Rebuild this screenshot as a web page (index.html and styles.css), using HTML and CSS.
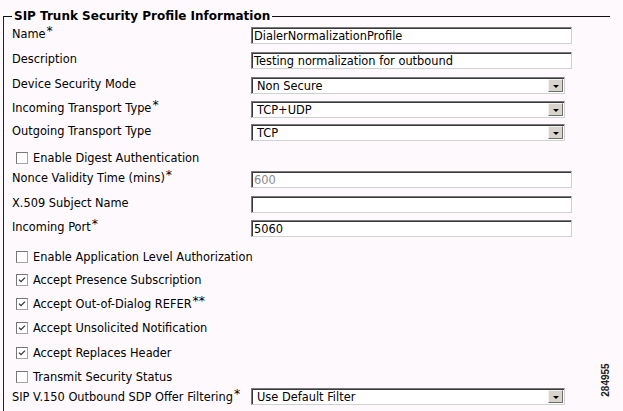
FILE: index.html
```html
<!DOCTYPE html>
<html lang="en">
<head>
<meta charset="utf-8">
<title>SIP Trunk Security Profile Information</title>
<link rel="stylesheet" href="styles.css">
</head>
<body>
<fieldset class="panel">
  <legend class="panel-title">SIP Trunk Security Profile Information</legend>
  <div class="form">
    <div class="label">Name<span class="req">*</span></div>
    <div class="field"><div class="textbox">DialerNormalizationProfile</div></div>

    <div class="label">Description</div>
    <div class="field"><div class="textbox">Testing normalization for outbound</div></div>

    <div class="label">Device Security Mode</div>
    <div class="field"><div class="select"><span class="select-value">Non Secure</span><span class="select-btn"><span class="arrow"></span></span></div></div>

    <div class="label">Incoming Transport Type<span class="req">*</span></div>
    <div class="field"><div class="select"><span class="select-value">TCP+UDP</span><span class="select-btn"><span class="arrow"></span></span></div></div>

    <div class="label">Outgoing Transport Type</div>
    <div class="field"><div class="select"><span class="select-value">TCP</span><span class="select-btn"><span class="arrow"></span></span></div></div>

    <div class="check-row"><span class="cb"></span><span>Enable Digest Authentication</span></div>

    <div class="label">Nonce Validity Time (mins)<span class="req">*</span></div>
    <div class="field"><div class="textbox disabled">600</div></div>

    <div class="label">X.509 Subject Name</div>
    <div class="field"><div class="textbox"></div></div>

    <div class="label">Incoming Port<span class="req">*</span></div>
    <div class="field"><div class="textbox">5060</div></div>

    <div class="check-row"><span class="cb"></span><span>Enable Application Level Authorization</span></div>
    <div class="check-row"><span class="cb"><svg viewBox="0 0 10 10" width="10" height="10"><polyline points="2,4.6 4,6.6 8,2.6" fill="none" stroke="#333" stroke-width="1.3"/></svg></span><span>Accept Presence Subscription</span></div>
    <div class="check-row"><span class="cb"><svg viewBox="0 0 10 10" width="10" height="10"><polyline points="2,4.6 4,6.6 8,2.6" fill="none" stroke="#333" stroke-width="1.3"/></svg></span><span>Accept Out-of-Dialog REFER<span class="req">**</span></span></div>
    <div class="check-row"><span class="cb"><svg viewBox="0 0 10 10" width="10" height="10"><polyline points="2,4.6 4,6.6 8,2.6" fill="none" stroke="#333" stroke-width="1.3"/></svg></span><span>Accept Unsolicited Notification</span></div>
    <div class="check-row"><span class="cb"><svg viewBox="0 0 10 10" width="10" height="10"><polyline points="2,4.6 4,6.6 8,2.6" fill="none" stroke="#333" stroke-width="1.3"/></svg></span><span>Accept Replaces Header</span></div>
    <div class="check-row"><span class="cb"></span><span>Transmit Security Status</span></div>

    <div class="label last">SIP V.150 Outbound SDP Offer Filtering<span class="req">*</span></div>
    <div class="field"><div class="select"><span class="select-value">Use Default Filter</span><span class="select-btn"><span class="arrow"></span></span></div></div>
  </div>
</fieldset>
<div class="fig-id">284955</div>
</body>
</html>
```
FILE: styles.css
```css
html, body {
  margin: 0;
  padding: 0;
}
body {
  background: #fdf9fd;
  width: 623px;
  height: 411px;
  overflow: hidden;
  position: relative;
  font-family: "DejaVu Sans", Verdana, sans-serif;
  font-size: 11.4px;
  color: #000;
}
.panel {
  margin: 9px 0 0 3px;
  padding: 0 0 0 8px;
  width: 598px;
  border: none;
  border-top: 1px solid #111;
  border-left: 1px solid #222;
  min-height: 420px;
  box-sizing: content-box;
}
.panel-title {
  font-weight: bold;
  font-size: 12px;
  line-height: 14px;
  padding: 0 2px;
  margin: 0;
}
.form {
  display: grid;
  grid-template-columns: 239px 321px;
  grid-template-rows: 25px 25px 24px 23px 21px 26px 25px 24px 26px 22px 23px 25px 24px 26px 22px 20px;
  padding-top: 4px;
}
.label {
  line-height: 14px;
  white-space: nowrap;
}
.label.last {
  padding-top: 2px;
}
.req {
  font-size: 12.5px;
  vertical-align: 3px;
  line-height: 0;
  margin-left: 1px;
}
.field {
  display: flex;
  align-items: flex-start;
}
.textbox {
  box-sizing: border-box;
  width: 321px;
  height: 17px;
  background: #fff;
  border: 1px solid;
  border-color: #7a7a7a #d0d0d0 #d0d0d0 #7a7a7a;
  box-shadow: inset 1px 1px 0 #3a3a3a;
  padding: 1px 0 0 2px;
  line-height: 14px;
  white-space: nowrap;
  overflow: hidden;
}
.textbox.disabled {
  color: #8a8a8a;
}
.select {
  box-sizing: border-box;
  width: 314px;
  height: 17px;
  background: #fff;
  border: 1px solid;
  border-color: #7a7a7a #d0d0d0 #d0d0d0 #7a7a7a;
  box-shadow: inset 1px 1px 0 #3a3a3a;
  display: flex;
  align-items: stretch;
  padding: 1px;
}
.select-value {
  flex: 1;
  padding: 0 0 0 4px;
  line-height: 14px;
  white-space: nowrap;
}
.select-btn {
  width: 15px;
  box-sizing: border-box;
  background: #d8d4cc;
  border: 1px solid;
  border-color: #f4f2ee #6e6e6e #6e6e6e #f4f2ee;
  display: flex;
  align-items: center;
  justify-content: center;
}
.arrow {
  width: 0;
  height: 0;
  border-left: 3px solid transparent;
  border-right: 3px solid transparent;
  border-top: 3px solid #000;
  margin-top: 1px;
}
.check-row {
  grid-column: 1 / -1;
  display: flex;
  align-items: center;
  gap: 5px;
  padding-left: 4px;
  line-height: 14px;
  white-space: nowrap;
}
.cb {
  box-sizing: border-box;
  width: 12px;
  height: 12px;
  background: #fff;
  border: 1px solid;
  border-color: #767676 #a4a4a4 #a4a4a4 #767676;
  display: flex;
  align-items: center;
  justify-content: center;
}
.cb svg {
  display: block;
}
.fig-id {
  position: absolute;
  left: 588px;
  top: 374px;
  width: 36px;
  text-align: center;
  transform: rotate(-90deg);
  font-family: "Liberation Sans", Arial, sans-serif;
  font-weight: bold;
  font-size: 10px;
  line-height: 12px;
  color: #222;
}
```
